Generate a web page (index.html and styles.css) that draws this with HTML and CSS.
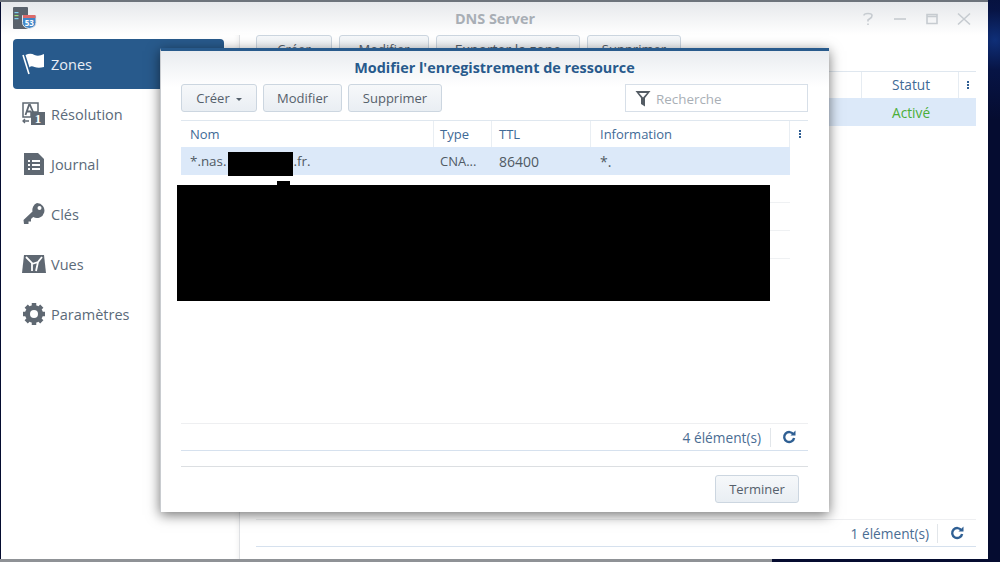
FILE: index.html
```html
<!DOCTYPE html>
<html lang="fr">
<head>
    <meta charset="UTF-8">
    <title>DNS Server</title>
    <link rel="stylesheet" href="styles.css">
</head>
<body>
    <div class="top-strip"></div>

    <div class="window">
        <!-- Title bar -->
        <header class="titlebar">
            <svg class="app-icon" width="24" height="22" viewBox="0 0 24 22">
                <rect x="0" y="0" width="15" height="22" rx="1" fill="#5a626c"/>
                <rect x="1.500" y="5" width="4" height="1.200" fill="#7fd0f0"/>
                <rect x="1.500" y="8" width="4" height="1.200" fill="#9be07a"/>
                <rect x="1.500" y="11" width="4" height="1.200" fill="#7fd0f0"/>
                <path d="M9.500 8.500h13.500v7q0 5-6.750 6q-6.750-1-6.750-6z" fill="#3f86c8" stroke="#e4e8ec" stroke-width="1"/>
                <rect x="10" y="8" width="12.500" height="3" fill="#dc6a6a"/>
                <text x="16.300" y="18.500" class="app-icon-text">53</text>
            </svg>
            <div class="titlebar-name">DNS Server</div>
            <div class="win-controls">
                <svg width="14" height="14" viewBox="0 0 14 14"><path d="M3 3.500q0-2 4-2t4 2q0 2-2 3l-2 1.500v1.500M7 11.500v1.500" fill="none" stroke="#c6cbd0" stroke-width="1.600"/></svg>
                <svg width="14" height="14" viewBox="0 0 14 14"><path d="M1 7h12" stroke="#c6cbd0" stroke-width="1.600"/></svg>
                <svg width="14" height="14" viewBox="0 0 14 14"><path d="M2 2.500h10v9h-10zM2 4.500h10" fill="none" stroke="#c6cbd0" stroke-width="1.600"/></svg>
                <svg width="14" height="14" viewBox="0 0 14 14"><path d="M1 1.500l12 11M13 1.500l-12 11" stroke="#c6cbd0" stroke-width="1.600"/></svg>
            </div>
        </header>

        <div class="window-body">
            <!-- Sidebar -->
            <nav class="sidebar">
                <a class="nav-item active">
                    <svg width="24" height="26" viewBox="0 0 24 26"><path d="M1 4l6 19" stroke="#fff" stroke-width="1.600"/><path d="M3.500 4q5-2.500 9 0q4 2 9.500-1v13q-5.500 1.500-9.500 0q-3.500-1.500-5 .5z" fill="#fff"/></svg>
                    <span>Zones</span>
                </a>
                <a class="nav-item">
                    <svg width="24" height="24" viewBox="0 0 24 24"><path d="M1 1h15v9h-7v5h-8z" fill="#fff" stroke="#5f6872" stroke-width="1.500"/><path d="M3.500 13l3.500-10h1l3.500 8M5 9.500h4" fill="none" stroke="#5f6872" stroke-width="1.800"/><rect x="9" y="10" width="14" height="13" fill="#5f6872"/><text x="16" y="21" class="res-one">1</text><path d="M1 19h6M3 17l-2 2 2 2" fill="none" stroke="#5f6872" stroke-width="1.300"/></svg>
                    <span>Résolution</span>
                </a>
                <a class="nav-item">
                    <svg width="24" height="24" viewBox="0 0 24 24"><path d="M2 1h14l6 6v16h-20z" fill="#5f6872"/><path d="M6 9h2M10 9h8M6 13h2M10 13h8M6 17h2M10 17h8" stroke="#fff" stroke-width="1.800"/></svg>
                    <span>Journal</span>
                </a>
                <a class="nav-item">
                    <svg width="24" height="24" viewBox="0 0 24 24"><path d="M15 1a7.500 7.500 0 1 1-3.800 14l-2.200 2v2.500h-2.500v2.500h-4.500l-.5-4 9-8.500a7.500 7.500 0 0 1 4.500-8.500z" fill="#5f6872"/><circle cx="17.500" cy="6" r="2" fill="#fff"/></svg>
                    <span>Clés</span>
                </a>
                <a class="nav-item">
                    <svg width="24" height="20" viewBox="0 0 24 20"><path d="M2 1h20l2 18h-24z" fill="#5f6872"/><path d="M4 3l6 6v8M20 3l-4 5-6 2M14 17l2-9" fill="none" stroke="#fff" stroke-width="1.800"/></svg>
                    <span>Vues</span>
                </a>
                <a class="nav-item">
                    <svg width="24" height="24" viewBox="0 0 24 24"><circle cx="12" cy="12" r="6.500" fill="none" stroke="#5f6872" stroke-width="5"/><path d="M12 1v22M1 12h22M4.200 4.200l15.600 15.600M19.800 4.200l-15.600 15.600" stroke="#5f6872" stroke-width="4.500"/><circle cx="12" cy="12" r="4" fill="#fff"/></svg>
                    <span>Paramètres</span>
                </a>
            </nav>

            <!-- Main panel, mostly under the dialog -->
            <main class="main">
                <div class="toolbar">
                    <button class="btn main-create">Créer</button>
                    <button class="btn main-edit">Modifier</button>
                    <button class="btn main-export">Exporter la zone</button>
                    <button class="btn main-delete">Supprimer</button>
                </div>
                <div class="main-head">
                    <div class="main-col-fill"></div>
                    <div class="main-col-status">Statut</div>
                    <div class="main-col-more"><span class="dots"></span></div>
                </div>
                <div class="main-row"><span class="status-on">Activé</span></div>
                <div class="main-space"></div>
                <div class="pager">
                    <span>1 élément(s)</span>
                    <span class="pager-sep"></span>
                    <svg class="refresh" width="14" height="14" viewBox="0 0 14 14"><path d="M11.500 4.500a5 5 0 1 0 .6 3.500" fill="none" stroke="#2f5f93" stroke-width="2.400"/><path d="M8.500 5.500h5v-5z" fill="#2f5f93"/></svg>
                </div>
            </main>
        </div>
    </div>

    <div class="bottom-strip"></div>

    <!-- Dialog -->
    <section class="dialog">
        <h1 class="dialog-title">Modifier l'enregistrement de ressource</h1>
        <div class="dialog-tools">
            <button class="btn dlg-create">Créer<i class="caret"></i></button>
            <button class="btn dlg-edit">Modifier</button>
            <button class="btn dlg-delete">Supprimer</button>
            <div class="search">
                <svg width="16" height="17" viewBox="0 0 16 17"><path d="M0.500 1h15l-5.500 7v8.500l-4-2.500v-6zM4 3l4 4.500 4-4.500z" fill="#545c64" fill-rule="evenodd"/></svg>
                <span>Recherche</span>
            </div>
        </div>

        <div class="grid-head">
            <div class="col-name">Nom</div>
            <div class="col-type">Type</div>
            <div class="col-ttl">TTL</div>
            <div class="col-info">Information</div>
            <div class="col-more"><span class="dots"></span></div>
        </div>
        <div class="grid-row selected">
            <div class="col-name">*.nas.<span class="mask-name"></span>.fr.</div>
            <div class="col-type">CNA...</div>
            <div class="col-ttl">86400</div>
            <div class="col-info">*.</div>
        </div>
        <div class="grid-row"></div>
        <div class="grid-row"></div>
        <div class="grid-row"></div>

        <div class="mask-tab"></div>
        <div class="mask-block"></div>

        <div class="dialog-space"></div>
        <div class="pager dlg-pager">
            <span>4 élément(s)</span>
            <span class="pager-sep"></span>
            <svg class="refresh" width="14" height="14" viewBox="0 0 14 14"><path d="M11.500 4.500a5 5 0 1 0 .6 3.500" fill="none" stroke="#2f5f93" stroke-width="2.400"/><path d="M8.500 5.500h5v-5z" fill="#2f5f93"/></svg>
        </div>
        <div class="dialog-foot">
            <button class="btn">Terminer</button>
        </div>
    </section>
</body>
</html>
```

FILE: styles.css
```css
/* Global styles */
* {
    box-sizing: border-box;
}

html, body {
    height: 100%;
}

body {
    margin: 0;
    overflow: hidden;
    font-family: 'Open Sans', sans-serif;
    font-size: 13px;
    color: #505a64;
    background: radial-gradient(circle at 995px 40px, #0f2f78 0, #071445 30px, #050c30 80px) #050c30;
}

.top-strip {
    width: 988px;
    height: 2px;
    background: #6d737b;
}

.bottom-strip {
    width: 772px;
    height: 3px;
    background: #8f9296;
}

/* Window */
.window {
    width: 987px;
    height: 557px;
    margin-left: 1px;
    background: #fff;
    display: flex;
    flex-direction: column;
}

.titlebar {
    height: 33px;
    flex: none;
    position: relative;
    display: flex;
    align-items: center;
    background: linear-gradient(#e6e8eb, #ffffff);
}

.app-icon {
    margin: -2px 0 0 12px;
}

.app-icon-text {
    font-size: 8px;
    font-weight: 700;
    fill: #fff;
    text-anchor: middle;
}

.titlebar-name {
    position: absolute;
    left: 0;
    right: 0;
    text-align: center;
    padding-left: 1px;
    font-size: 14.400px;
    font-weight: 700;
    color: #a8aeb5;
}

.win-controls {
    margin-left: auto;
    margin-right: 17px;
    display: flex;
    gap: 18px;
}

.window-body {
    flex: 1;
    display: flex;
    min-height: 0;
}

/* Sidebar */
.sidebar {
    width: 239px;
    flex: none;
    padding: 4px 15px 0 12px;
    border-right: 1px solid #dfe1e4;
    box-shadow: inset -6px 0 6px -6px rgba(0, 0, 0, 0.08);
}

.nav-item {
    height: 50px;
    display: flex;
    align-items: center;
    gap: 5px;
    padding-left: 9px;
    font-size: 14.500px;
    color: #5b6a79;
    border-radius: 4px;
}

.nav-item svg {
    flex: none;
}

.nav-item.active {
    background: #285a8c;
    color: #e8eef5;
}

.res-one {
    font-family: 'Liberation Serif', serif;
    font-size: 13px;
    font-weight: 700;
    fill: #fff;
    text-anchor: middle;
}

/* Buttons */
.btn {
    height: 28px;
    padding: 0;
    font-family: inherit;
    font-size: 13px;
    color: #55606b;
    background: linear-gradient(#f6f8fa, #e9eef3);
    border: 1px solid #ccd6e0;
    border-radius: 3px;
}

.caret {
    display: inline-block;
    margin-left: 6px;
    vertical-align: middle;
    border-top: 3px solid #55606b;
    border-left: 3px solid transparent;
    border-right: 3px solid transparent;
}

/* Main panel */
.main {
    flex: 1;
    min-width: 0;
    padding: 0 12px 12px 16px;
    display: flex;
    flex-direction: column;
}

.toolbar {
    display: flex;
    gap: 7px;
    height: 36px;
    flex: none;
}

.main-create { width: 76px; }
.main-edit { width: 90px; }
.main-export { width: 144px; font-size: 14px; }
.main-delete { width: 94px; }

.main-head {
    height: 27px;
    flex: none;
    display: flex;
    border-top: 1px solid #dfe7ef;
    color: #3f6a96;
    font-size: 13.700px;
}

.main-col-fill {
    flex: 1;
    border-right: 1px solid #e6ecf2;
}

.main-col-status {
    width: 97px;
    padding-left: 2px;
    text-align: center;
    line-height: 25px;
    border-right: 1px solid #e6ecf2;
}

.main-col-more {
    width: 17px;
    display: flex;
    align-items: center;
    justify-content: center;
}

.main-row {
    height: 28px;
    flex: none;
    background: #dce9f9;
    padding-left: 636px;
    line-height: 30px;
    font-size: 13.700px;
}

.status-on {
    color: #4bae38;
}

.main-space {
    flex: 1;
}

/* Three dots menu */
.dots {
    width: 2px;
    height: 2px;
    background: #2f5f93;
    box-shadow: 0 3px 0 #2f5f93, 0 -3px 0 #2f5f93;
}

/* Pager */
.pager {
    height: 28px;
    flex: none;
    display: flex;
    align-items: center;
    justify-content: flex-end;
    font-size: 13.700px;
    color: #4a6d93;
    border-top: 1px solid #eeeff1;
    border-bottom: 1px solid #d6e1ee;
    padding-right: 12px;
}

.pager-sep {
    width: 1px;
    height: 19px;
    margin: 0 12px 0 8px;
    background: #e2e6ea;
}

/* Dialog */
.dialog {
    position: absolute;
    left: 160px;
    top: 48px;
    width: 669px;
    height: 464px;
    padding: 0 21px 0 20px;
    background: linear-gradient(#e9ecf0, #ffffff 36px);
    border-top: 3px solid #285a8c;
    border-left: 1px solid #c9ccd0;
    box-shadow: 0 3px 12px rgba(0, 0, 0, 0.55);
    display: flex;
    flex-direction: column;
}

.dialog-title {
    margin: 0;
    height: 33px;
    flex: none;
    line-height: 34px;
    text-align: center;
    font-size: 14.400px;
    font-weight: 700;
    color: #285a8c;
}

.dialog-tools {
    height: 36px;
    flex: none;
    display: flex;
    gap: 6px;
}

.dlg-create { width: 76px; }
.dlg-edit { width: 79px; }
.dlg-delete { width: 94px; }

.search {
    width: 183px;
    height: 28px;
    margin-left: auto;
    display: flex;
    align-items: center;
    gap: 5px;
    padding-left: 9px;
    background: #fff;
    border: 1px solid #d7dfe8;
    font-size: 13.400px;
    color: #a9afb6;
}

.search span {
    margin-top: 1px;
}

/* Record grid */
.grid-head, .grid-row {
    display: flex;
    flex: none;
}

.grid-head {
    height: 27px;
    line-height: 27px;
    border-top: 1px solid #dfe7ef;
    color: #3f6a96;
}

.grid-head > div {
    border-right: 1px solid #e9eef3;
}

.grid-head .col-more {
    border-right: 0;
    padding-left: 1px;
    display: flex;
    align-items: center;
    justify-content: center;
}

.grid-row {
    width: 609px;
    height: 28px;
    line-height: 29px;
    border-bottom: 1px solid #eff1f3;
}

.grid-row.selected {
    background: #dce9f9;
    border-bottom: 0;
}

.col-name, .col-info {
    padding-left: 9px;
    white-space: nowrap;
}

.col-type {
    padding-left: 6px;
    white-space: nowrap;
}

.col-ttl {
    padding-left: 7px;
    white-space: nowrap;
}

.grid-row .col-ttl, .grid-row .col-info {
    font-size: 14px;
}

.grid-row .col-name {
    font-size: 13.400px;
}

.col-name { width: 253px; }
.col-type { width: 58px; }
.col-ttl { width: 99px; }
.col-info { width: 199px; }
.col-more { width: 18px; }

/* Black masks from the original screenshot */
.mask-name {
    display: inline-block;
    width: 65px;
    height: 24px;
    margin-left: 2px;
    vertical-align: -10px;
    background: #000;
}

.mask-block {
    position: absolute;
    left: 16px;
    top: 134px;
    width: 593px;
    height: 116px;
    background: #000;
}

.mask-tab {
    position: absolute;
    left: 116px;
    top: 130px;
    width: 13px;
    height: 5px;
    background: #000;
}

.dialog-space {
    flex: 1;
}

.dlg-pager {
    border-top-color: #eeeff1;
}

.dlg-pager .pager-sep {
    margin: 0 11px 0 9px;
}

.dialog-foot {
    height: 46px;
    flex: none;
    margin-top: 15px;
    border-top: 1px solid #dcdfe2;
    display: flex;
    justify-content: flex-end;
    align-items: flex-start;
    padding: 8px 9px 0 0;
}

.dialog-foot .btn {
    width: 84px;
}
```
